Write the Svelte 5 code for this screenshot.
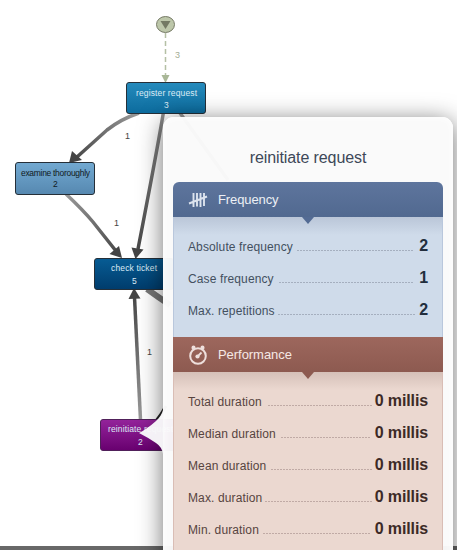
<script>
  const frequency = [
    { label: 'Absolute frequency', value: '2', from: 297, to: 413 },
    { label: 'Case frequency', value: '1', from: 279, to: 413 },
    { label: 'Max. repetitions', value: '2', from: 278, to: 415 }
  ];
  const performance = [
    { label: 'Total duration', value: '0 millis', from: 268, to: 372 },
    { label: 'Median duration', value: '0 millis', from: 281, to: 370 },
    { label: 'Mean duration', value: '0 millis', from: 271, to: 372 },
    { label: 'Max. duration', value: '0 millis', from: 265, to: 372 },
    { label: 'Min. duration', value: '0 millis', from: 263, to: 370 }
  ];
</script>

{#snippet rows(items)}
  {#each items as item}
    <div class="row">
      <span class="label" style="width: {item.from - 188}px">{item.label}</span>
      <span class="dots" style="width: {item.to - item.from}px"></span>
      <span class="value">{item.value}</span>
    </div>
  {/each}
{/snippet}

<main>
  <svg class="graph" width="457" height="550" viewBox="0 0 457 550">
    <defs>
      <linearGradient id="blue" x2="0" y2="1"><stop stop-color="#258bbd" /><stop offset="1" stop-color="#0c6b9d" /></linearGradient>
      <linearGradient id="light" x2="0" y2="1"><stop stop-color="#72a9d1" /><stop offset="1" stop-color="#5688b0" /></linearGradient>
      <linearGradient id="navy" x2="0" y2="1"><stop stop-color="#075c94" /><stop offset="1" stop-color="#003c6c" /></linearGradient>
      <linearGradient id="purple" x2="0" y2="1"><stop stop-color="#94249b" /><stop offset="1" stop-color="#68006f" /></linearGradient>
      <linearGradient id="e1" gradientUnits="userSpaceOnUse" x1="138" y1="112" x2="72" y2="160"><stop stop-color="#999" /><stop offset="1" stop-color="#444" /></linearGradient>
      <linearGradient id="e2" gradientUnits="userSpaceOnUse" x1="66" y1="194" x2="120" y2="257"><stop stop-color="#999" /><stop offset="1" stop-color="#444" /></linearGradient>
      <linearGradient id="e3" gradientUnits="userSpaceOnUse" x1="163" y1="113" x2="137" y2="257"><stop stop-color="#8c8c8c" /><stop offset="1" stop-color="#444" /></linearGradient>
      <linearGradient id="e4" gradientUnits="userSpaceOnUse" x1="141" y1="419" x2="134" y2="290"><stop stop-color="#999" /><stop offset="1" stop-color="#444" /></linearGradient>
    </defs>
    <rect y="546" width="457" height="4" fill="#686868" />
    <path d="M165.500 33V75" stroke="#b5c0a5" stroke-width="1.500" stroke-dasharray="5 3" />
    <path d="M161.500 75h8l-4 8z" fill="#a9b797" />
    <ellipse cx="165.500" cy="24.500" rx="9" ry="8" fill="#bdc7aa" stroke="#777b67" />
    <path d="M160.500 21h10l-5 8z" fill="#737963" />
    <g fill="none" stroke-width="3.500">
      <path d="M139 113Q121 119 107 130L77 157" stroke="url(#e1)" />
      <path d="M66 194Q83 210 93 222L116 251" stroke="url(#e2)" />
      <path d="M163.500 112Q157 151 138 249" stroke="url(#e3)" />
      <path d="M140.500 420L134.500 297" stroke="url(#e4)" />
      <path d="M180 113L228 180" stroke="#999" />
      <path d="M147 289Q158 297 170 305" stroke="#777" stroke-width="6" />
      <path d="M156 421Q161 415 166 406" stroke="#222" stroke-width="3" />
    </g>
    <g fill="#444">
      <path d="M69 163L72 151L82 160z" />
      <path d="M122 258L109.500 254L119 246z" />
      <path d="M135.500 259L131.500 247.500L143.500 249.500z" />
      <path d="M134 288L128.500 299L140.500 298.500z" />
    </g>
    <g stroke="#252f38">
      <rect x="126.500" y="82.500" width="79" height="31" rx="2.500" fill="url(#blue)" />
      <rect x="15.500" y="162.500" width="79" height="32" rx="2.500" fill="url(#light)" />
      <rect x="94.500" y="258.500" width="79" height="31" rx="2.500" fill="url(#navy)" />
      <rect x="100.500" y="419.500" width="79" height="31" rx="2.500" fill="url(#purple)" stroke="#50205a" />
    </g>
    <g class="nodes">
      <text x="136" y="96" textLength="61">register request</text><text x="164" y="108">3</text>
      <g fill="#111a22"><text x="21" y="176" textLength="69">examine thoroughly</text><text x="53" y="187">2</text></g>
      <text x="111" y="271" textLength="46">check ticket</text><text x="132" y="284">5</text>
      <text x="108" y="432" textLength="65">reinitiate request</text><text x="138" y="445">2</text>
    </g>
    <g class="counts">
      <text x="175" y="58" fill="#a4ae94">3</text>
      <text x="125" y="139">1</text><text x="114" y="226">1</text><text x="147" y="355">1</text>
    </g>
  </svg>

  <section class="card">
    <h1>reinitiate request</h1>
    <div class="panel freq">
      <header>
        <svg width="20" height="18" viewBox="0 0 20 18" fill="none" stroke="#dce3ee" stroke-width="1.900">
          <path d="M5.500 2V16M9 2V15.500M12.500 2V16M16 2V15M1 12.500L19 5.500" />
        </svg>
        <span>Frequency</span>
      </header>
      <div class="list">{@render rows(frequency)}</div>
    </div>
    <div class="panel perf">
      <header>
        <svg width="20" height="20" viewBox="0 0 20 20" fill="none" stroke="#eedfdc">
          <circle cx="10" cy="11" r="7.800" stroke-width="2" />
          <path d="M9.500 11.500L13.500 7.500" stroke-width="1.800" />
          <circle cx="9.500" cy="11.500" r="2.100" fill="#eedfdc" stroke="none" />
          <path d="M5.500 3V2.500M14.500 3V2.500" stroke-width="4" stroke-linecap="round" />
        </svg>
        <span>Performance</span>
      </header>
      <div class="list">{@render rows(performance)}</div>
    </div>
  </section>
  <svg class="pointer" width="26" height="46" viewBox="0 0 26 46">
    <path d="M26 0H25C24 4 22 7 18 11Q9 19 1 23Q9 27 18 33Q24 37 25 44H26z" fill="#f9f9fa" fill-opacity=".97" />
  </svg>
</main>

<style>
  :global(body) { margin: 0; background: #fff; }
  main { position: relative; width: 457px; height: 550px; overflow: hidden; font-family: "Liberation Sans", Arial, sans-serif; }
  .graph { position: absolute; inset: 0; }
  .nodes { font-size: 8.500px; fill: #dcebf5; }
  .counts { font-size: 9px; fill: #444; }
  .card {
    position: relative;
    box-sizing: border-box;
    width: 290px;
    height: 500px;
    margin: 117px 0 0 163px;
    padding: 0 10px;
    border-radius: 11px;
    background: rgba(250, 250, 250, .97);
    box-shadow: 0 4px 25px rgba(0, 0, 0, .56), inset 0 0 8px #fff;
  }
  h1 { margin: 0; height: 65px; padding-top: 1px; box-sizing: border-box; font-size: 16px; letter-spacing: -.1px; line-height: 80px; font-weight: 400; text-align: center; color: #3d4858; }
  header { position: relative; display: flex; align-items: center; height: 35px; box-sizing: border-box; padding-left: 15px; font-size: 13px; color: #edf0f5; }
  header svg { display: block; }
  header span { margin-left: 10px; letter-spacing: -.05px; }
  .freq header span { letter-spacing: -.1px; }
  header::after { content: ""; position: absolute; left: 129px; top: 35px; border: 6px solid transparent; border-top: 7px solid #536b94; border-bottom: 0; }
  .freq header { background: linear-gradient(#5e759d, #516990); border-radius: 6px 6px 0 0; }
  .perf header { background: linear-gradient(#9d675d, #8d5a50); color: #f5e8e5; }
  .perf header::after { border-top-color: #8d5a50; }
  .list { box-sizing: border-box; padding: 13px 14px 0; border: solid #b9c7dc; border-width: 0 1px; }
  .freq .list { height: 120px; background: linear-gradient(#bac6d8, #cfdbea 18px); }
  .perf .list { height: 190px; border-color: #d9bdb5; background: linear-gradient(#d5c0b8, #ebd8d0 18px); }
  .row { display: flex; height: 32px; line-height: 32px; }
  .label { position: relative; top: 1px; flex: none; font-size: 12px; letter-spacing: .12px; white-space: nowrap; color: #43505f; }
  .dots { flex: none; height: 1px; margin-top: 20px; background: repeating-linear-gradient(90deg, #a5afbf 0 2px, transparent 2px 3px); }
  .value { margin-left: auto; font-size: 16px; letter-spacing: -.12px; font-weight: 700; color: #222e3d; white-space: nowrap; }
  .perf .label { color: #57443f; }
  .perf .dots { background: repeating-linear-gradient(90deg, #c0aaa5 0 2px, transparent 2px 3px); }
  .perf .value { color: #3c2a26; }
  .pointer { position: absolute; left: 138px; top: 410px; }
</style>
